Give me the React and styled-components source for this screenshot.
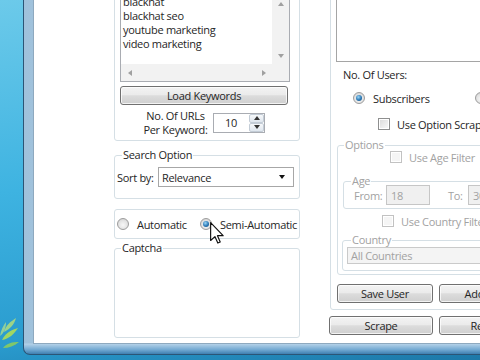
import styled, { createGlobalStyle, css } from 'styled-components';

const FONT = `"Open Sans", "Noto Sans", sans-serif`;

const GlobalStyle = createGlobalStyle`
  html, body { margin: 0; padding: 0; }
  * { box-sizing: border-box; }
`;

const Desktop = styled.div`
  width: 480px;
  height: 360px;
  overflow: hidden;
  display: flex;
  align-items: flex-start;
  background: linear-gradient(172deg, #6ccaea 0%, #3eb3e1 45%, #2a9ccf 80%, #1d78a8 100%);
  font-family: ${FONT};
  font-size: 11px;
  letter-spacing: -0.3px;
  color: #262626;
`;

const WallStrip = styled.div`
  width: 23px;
  height: 360px;
  flex: none;
  display: flex;
  align-items: flex-end;
  padding-bottom: 10px;
`;

const Window = styled.div`
  flex: none;
  width: 520px;
  height: 355px;
  display: flex;
  padding: 0 0 10px 9px;
  border-left: 1px solid #2b5576;
  border-bottom: 1px solid #2b5576;
  border-bottom-left-radius: 7px;
  background:
    linear-gradient(180deg, transparent 343px, #b3d1e8 344px, #6ea6d0 350px, #3f7fb0 354px),
    linear-gradient(90deg, #9fc1db, #b9d5ea 40%, #87aecd);
`;

const Client = styled.div`
  flex: 1;
  display: flex;
  align-items: flex-start;
  gap: 30px;
  padding-left: 80px;
  background: #fff;
  border-left: 1px solid #8ea9bf;
  border-bottom: 1px solid #8ea9bf;
  overflow: hidden;
`;

const LeftCol = styled.div`
  width: 186px;
  flex: none;
  display: flex;
  flex-direction: column;
`;

const RightCol = styled.div`
  width: 300px;
  flex: none;
  display: flex;
  flex-direction: column;
`;

const Panel = styled.div`
  border: 1px solid #d5dfe5;
  border-radius: 3px;
  display: flex;
  flex-direction: column;
`;

const KeywordPanel = styled(Panel)`
  margin-top: -16px;
  padding: 9px 0 5px 5px;
`;

const UsersPanel = styled(Panel)`
  margin-top: -40px;
  padding: 5px 0 6px 6px;
`;

const GroupBox = styled.fieldset`
  margin: 0;
  min-width: 0;
  border: 1px solid #d5dfe5;
  border-radius: 3px;
  display: flex;
  flex-direction: column;
`;

const Legend = styled.legend`
  padding: 0 1px;
  margin-left: ${p => p.$offset}px;
  line-height: 14px;
  font-size: 11px;
  color: ${p => (p.$disabled ? '#a2a2a2' : '#262626')};
`;

const SearchGroup = styled(GroupBox)`
  margin-top: 7px;
  padding: 5px 5px 11px 2px;
`;

const CaptchaGroup = styled(GroupBox)`
  margin-top: 2px;
  height: 97px;
  padding: 0 0 0 2px;
`;

const OptionsGroup = styled(GroupBox)`
  margin-top: 7px;
  padding: 0 0 3px 5px;
`;

const AgeGroup = styled(GroupBox)`
  margin-top: 10px;
  padding: 0 0 3px 6px;
`;

const CountryGroup = styled(GroupBox)`
  margin-top: 5px;
  margin-left: -1px;
  padding: 0 6px 6px 4px;
`;

const KeywordBox = styled.div`
  width: 170px;
  height: 88px;
  border: 1px solid #a9acb2;
  background: #fff;
  display: grid;
  grid-template-columns: 1fr 17px;
  grid-template-rows: 1fr 17px;
`;

const KeywordList = styled.div`
  padding: 0 2px;
  line-height: 14px;
  overflow: hidden;
  white-space: nowrap;
`;

const ScrollBar = styled.div`
  background: #f2f2f2;
  display: flex;
  flex-direction: ${p => (p.$vertical ? 'column' : 'row')};
  justify-content: space-between;
`;

const ScrollCorner = styled.div`
  background: #f2f2f2;
`;

const arrowShapes = {
  up: css`border-left: 3.5px solid transparent; border-right: 3.5px solid transparent; border-bottom: 4px solid ${p => p.$color};`,
  down: css`border-left: 3.5px solid transparent; border-right: 3.5px solid transparent; border-top: 4px solid ${p => p.$color};`,
  left: css`border-top: 3.5px solid transparent; border-bottom: 3.5px solid transparent; border-right: 4px solid ${p => p.$color};`,
  right: css`border-top: 3.5px solid transparent; border-bottom: 3.5px solid transparent; border-left: 4px solid ${p => p.$color};`,
};

const Arrow = styled.span`
  width: 0;
  height: 0;
  ${p => arrowShapes[p.$dir]}
`;

const ScrollButton = styled.span`
  width: 17px;
  height: 17px;
  flex: none;
  display: flex;
  align-items: center;
  justify-content: center;
`;

const Button = styled.button`
  width: ${p => p.$w}px;
  height: 19px;
  flex: none;
  padding: 0;
  border: 1px solid #707070;
  border-radius: 3px;
  background: linear-gradient(#f3f3f3, #ebebeb 45%, #dcdcdc 52%, #cfcfcf);
  box-shadow: inset 0 0 0 1px rgba(255, 255, 255, 0.75);
  font-family: ${FONT};
  font-size: 11px;
  letter-spacing: -0.3px;
  color: #262626;
`;

const LoadButton = styled(Button)`
  margin-top: 4px;
`;

const UrlRow = styled.div`
  margin-top: 5px;
  height: 25px;
  display: flex;
  align-items: center;
  gap: 5px;
  padding-left: 23px;
`;

const UrlLabel = styled.div`
  width: 65px;
  text-align: center;
  line-height: 14px;
  white-space: nowrap;
`;

const SpinBox = styled.div`
  width: 52px;
  height: 20px;
  border: 1px solid #a9acb2;
  background: #fff;
  display: flex;
  align-items: center;
  padding-left: 11px;
`;

const SpinButtons = styled.div`
  margin-left: auto;
  width: 15px;
  height: 18px;
  display: flex;
  flex-direction: column;
`;

const SpinButton = styled.span`
  flex: 1;
  display: flex;
  align-items: center;
  justify-content: center;
  background: linear-gradient(#f6f8fa, #dfe6ee);
  border: 1px solid #c3ccd6;
  border-radius: 2px;
`;

const SortRow = styled.div`
  display: flex;
  align-items: center;
`;

const SortLabel = styled.span`
  width: 41px;
  flex: none;
`;

const ComboBox = styled.div`
  flex: 1;
  height: 20px;
  display: flex;
  align-items: center;
  padding: 0 8px 0 3px;
  border: 1px solid ${p => (p.$disabled ? '#cacaca' : '#a7a7a7')};
  background: ${p => (p.$disabled ? '#f4f4f4' : '#fff')};
  color: ${p => (p.$disabled ? '#a2a2a2' : 'inherit')};
  white-space: nowrap;
  overflow: hidden;
`;

const DropArrow = styled.span`
  margin-left: auto;
  border-left: 3.5px solid transparent;
  border-right: 3.5px solid transparent;
  border-top: 4px solid #111;
`;

const ModePanel = styled(Panel)`
  position: relative;
  margin-top: 10px;
  height: 30px;
  flex-direction: row;
  align-items: center;
  padding-left: 2px;
`;

const RadioItem = styled.label`
  width: ${p => p.$w}px;
  flex: none;
  display: flex;
  align-items: center;
  gap: 8px;
  white-space: nowrap;
`;

const Radio = styled.span`
  position: relative;
  width: 12px;
  height: 12px;
  flex: none;
  border-radius: 50%;
  border: 1px solid #9c9c9c;
  background: radial-gradient(circle at 50% 60%, #f7f7f7 0%, #e3e3e3 55%, #c8c8c8 100%);
  &::after {
    content: '';
    display: ${p => (p.$checked ? 'block' : 'none')};
    position: absolute;
    inset: 2px;
    border-radius: 50%;
    background: radial-gradient(circle at 40% 35%, #9ad6f7, #2a77b4 55%, #174f7e);
  }
`;

const Cursor = styled.svg`
  position: absolute;
  left: 95px;
  top: 12px;
`;

const ListBox = styled.div`
  height: 96px;
  margin-left: -1px;
  border: 1px solid #a5a5a5;
  background: #fff;
`;

const TextLine = styled.div`
  height: 14px;
  line-height: 14px;
  margin-top: ${p => p.$mt}px;
  margin-left: ${p => p.$ml}px;
  white-space: nowrap;
`;

const OptionRow = styled.div`
  height: 14px;
  display: flex;
  align-items: center;
  gap: ${p => p.$gap || 7}px;
  margin-top: ${p => p.$mt}px;
  padding-left: ${p => p.$indent}px;
  color: ${p => (p.$disabled ? '#a2a2a2' : 'inherit')};
  white-space: nowrap;
`;

const CheckBox = styled.span`
  width: 12px;
  height: 12px;
  flex: none;
  border: 1px solid ${p => (p.$disabled ? '#c2c2c2' : '#8e8f8f')};
  box-shadow: inset 0 0 0 1px #fff;
  background: ${p => (p.$disabled ? '#f5f5f5' : 'linear-gradient(135deg, #d9d9d9, #fafafa)')};
`;

const AgeRow = styled.div`
  margin-top: -3px;
  height: 20px;
  display: flex;
  align-items: center;
  color: #a2a2a2;
`;

const AgeLabel = styled.span`
  width: ${p => p.$w}px;
  margin-left: ${p => p.$ml}px;
  flex: none;
`;

const AgeInput = styled.div`
  width: 44px;
  height: 20px;
  flex: none;
  display: flex;
  align-items: center;
  padding-left: 4px;
  border: 1px solid #c6c6c6;
  background: #f0f0f0;
`;

const ButtonRow = styled.div`
  display: flex;
  gap: 6px;
  margin-top: ${p => p.$mt}px;
  margin-left: ${p => p.$ml}px;
`;

function Leaves () {
  return (
    <svg width="22" height="40" viewBox="0 0 22 40">
      <path d="M2 30 C6 22 12 20 18 18 C14 24 9 29 2 30 Z" fill="#b7e04f" opacity="0.85" />
      <path d="M4 22 C6 15 10 12 16 8 C14 15 10 19 4 22 Z" fill="#cde96a" opacity="0.7" />
      <path d="M3 38 C7 33 12 32 19 32 C14 36 9 38 3 38 Z" fill="#9ed64a" opacity="0.75" />
      <path d="M0 26 C1 20 3 16 6 12 C6 18 4 23 0 26 Z" fill="#d6ef7a" opacity="0.6" />
    </svg>
  );
}

export default function App () {
  return (
    <Desktop>
      <GlobalStyle />
      <WallStrip>
        <Leaves />
      </WallStrip>
      <Window>
        <Client>
          <LeftCol>
            <KeywordPanel>
              <KeywordBox>
                <KeywordList>
                  <div>blackhat</div>
                  <div>blackhat seo</div>
                  <div>youtube marketing</div>
                  <div>video marketing</div>
                </KeywordList>
                <ScrollBar $vertical>
                  <ScrollButton><Arrow $dir="up" $color="#a0a0a0" /></ScrollButton>
                  <ScrollButton><Arrow $dir="down" $color="#a0a0a0" /></ScrollButton>
                </ScrollBar>
                <ScrollBar>
                  <ScrollButton><Arrow $dir="left" $color="#a0a0a0" /></ScrollButton>
                  <ScrollButton><Arrow $dir="right" $color="#a0a0a0" /></ScrollButton>
                </ScrollBar>
                <ScrollCorner />
              </KeywordBox>
              <LoadButton $w={168}>Load Keywords</LoadButton>
              <UrlRow>
                <UrlLabel>No. Of URLs<br />Per Keyword:</UrlLabel>
                <SpinBox>
                  10
                  <SpinButtons>
                    <SpinButton><Arrow $dir="up" $color="#333" /></SpinButton>
                    <SpinButton><Arrow $dir="down" $color="#333" /></SpinButton>
                  </SpinButtons>
                </SpinBox>
              </UrlRow>
            </KeywordPanel>

            <SearchGroup>
              <Legend $offset={5}>Search Option</Legend>
              <SortRow>
                <SortLabel>Sort by:</SortLabel>
                <ComboBox>
                  Relevance
                  <DropArrow />
                </ComboBox>
              </SortRow>
            </SearchGroup>

            <ModePanel>
              <RadioItem $w={83}><Radio />Automatic</RadioItem>
              <RadioItem $w={96}><Radio $checked />Semi-Automatic</RadioItem>
              <Cursor width="14" height="22" viewBox="0 0 12 19">
                <path d="M0.5 0.5 L0.5 16 L4.2 12.6 L6.7 18.2 L8.8 17.3 L6.4 11.8 L11.3 11.8 Z" fill="#fff" stroke="#111" strokeWidth="1" strokeLinejoin="round" />
              </Cursor>
            </ModePanel>

            <CaptchaGroup>
              <Legend $offset={4}>Captcha</Legend>
            </CaptchaGroup>
          </LeftCol>

          <RightCol>
            <UsersPanel>
              <ListBox />
              <TextLine $mt={6} $ml={6}>No. Of Users:</TextLine>
              <OptionRow $mt={9} $indent={16} $gap={8}>
                <RadioItem $w={114}><Radio $checked />Subscribers</RadioItem>
                <RadioItem $w={90}><Radio />Channels</RadioItem>
              </OptionRow>
              <OptionRow $mt={12} $indent={41}>
                <CheckBox />Use Option Scraper
              </OptionRow>

              <OptionsGroup>
                <Legend $offset={1} $disabled>Options</Legend>
                <OptionRow $mt={-2} $indent={47} $disabled>
                  <CheckBox $disabled />Use Age Filter
                </OptionRow>
                <AgeGroup>
                  <Legend $offset={1} $disabled>Age</Legend>
                  <AgeRow>
                    <AgeLabel $w={32} $ml={4}>From:</AgeLabel>
                    <AgeInput>18</AgeInput>
                    <AgeLabel $w={20} $ml={18}>To:</AgeLabel>
                    <AgeInput>30</AgeInput>
                  </AgeRow>
                </AgeGroup>
                <OptionRow $mt={5} $indent={39} $disabled>
                  <CheckBox $disabled />Use Country Filter
                </OptionRow>
                <CountryGroup>
                  <Legend $offset={4} $disabled>Country</Legend>
                  <ComboBox $disabled>All Countries</ComboBox>
                </CountryGroup>
              </OptionsGroup>

              <ButtonRow $mt={9} $ml={0}>
                <Button $w={96}>Save User</Button>
                <Button $w={96}>Add User</Button>
              </ButtonRow>
            </UsersPanel>

            <ButtonRow $mt={6} $ml={-1}>
              <Button $w={104}>Scrape</Button>
              <Button $w={104}>Reset All</Button>
            </ButtonRow>
          </RightCol>
        </Client>
      </Window>
    </Desktop>
  );
}
